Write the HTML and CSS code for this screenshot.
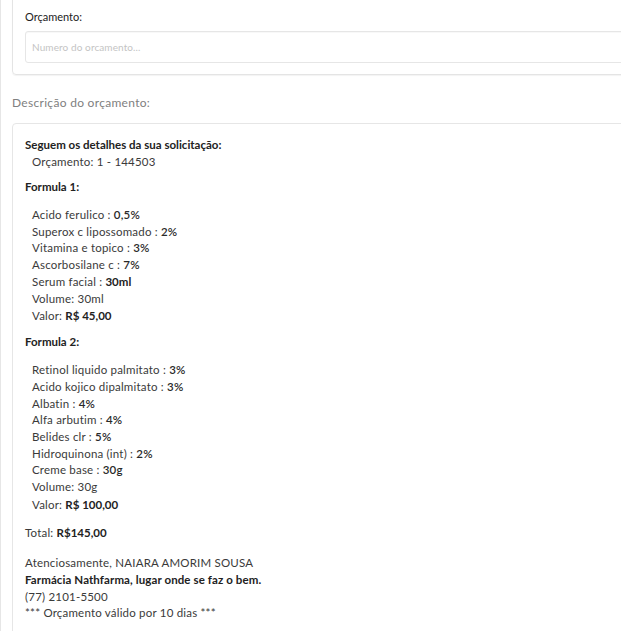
FILE: index.html
```html
<!DOCTYPE html>
<html lang="pt-BR">
<head>
<meta charset="utf-8">
<title>Orçamento</title>
<link rel="stylesheet" href="styles.css">
</head>
<body>
<div class="page">
  <div class="card">
    <label class="field-label" for="orc">Orçamento:</label>
    <input id="orc" class="field-input" type="text" placeholder="Numero do orcamento...">
  </div>

  <div class="desc-label">Descrição do orçamento:</div>

  <div class="desc-box">
    <div class="intro">
      <div class="strong">Seguem os detalhes da sua solicitação:</div>
      <div class="indent">Orçamento: 1 - 144503</div>
    </div>

    <div class="formula-title">Formula 1:</div>
    <ul class="items">
      <li>Acido ferulico : <span class="val">0,5%</span></li>
      <li>Superox c lipossomado : <span class="val">2%</span></li>
      <li>Vitamina e topico : <span class="val">3%</span></li>
      <li>Ascorbosilane c : <span class="val">7%</span></li>
      <li>Serum facial : <b>30ml</b></li>
      <li>Volume: 30ml</li>
      <li class="price">Valor: <b>R$ 45,00</b></li>
    </ul>

    <div class="formula-title">Formula 2:</div>
    <ul class="items">
      <li>Retinol liquido palmitato : <span class="val">3%</span></li>
      <li>Acido kojico dipalmitato : <span class="val">3%</span></li>
      <li>Albatin : <span class="val">4%</span></li>
      <li>Alfa arbutim : <span class="val">4%</span></li>
      <li>Belides clr : <span class="val">5%</span></li>
      <li>Hidroquinona (int) : <span class="val">2%</span></li>
      <li>Creme base : <span class="val">30g</span></li>
      <li>Volume: 30g</li>
      <li class="price">Valor: <b>R$ 100,00</b></li>
    </ul>

    <div class="total">Total: <b>R$145,00</b></div>

    <div class="signature">
      <div>Atenciosamente, NAIARA AMORIM SOUSA</div>
      <div class="strong wide">Farmácia Nathfarma, lugar onde se faz o bem.</div>
      <div>(77) 2101-5500</div>
      <div>*** Orçamento válido por 10 dias ***</div>
    </div>
  </div>
</div>
</body>
</html>
```

FILE: styles.css
```css
html, body {
  margin: 0;
  padding: 0;
  overflow: hidden;
  background: #fff;
}

body {
  font-family: Lato, "Open Sans", Arial, sans-serif;
  font-size: 11.5px;
  line-height: 16.7px;
  letter-spacing: 0.2px;
  color: #3a3a3a;
}

.page {
  width: 700px;
  border-left: 1px solid #e6e6e6;
  padding-left: 11px;
  min-height: 700px;
}

.card {
  margin-top: -10px;
  padding: 18px 12px 11px 12px;
  border: 1px solid #e4e4e4;
  border-radius: 4px;
  box-shadow: 0 1px 1px rgba(0, 0, 0, 0.05);
}

.field-label {
  display: block;
  margin-bottom: 5px;
  font-size: 11px;
  letter-spacing: 0;
  color: #222;
}

.field-input {
  display: block;
  box-sizing: border-box;
  width: 100%;
  height: 32px;
  margin: 0;
  padding: 0 6px;
  border: 1px solid #e6e6e6;
  border-radius: 3px;
  font-family: inherit;
  font-size: 10px;
  letter-spacing: 0.1px;
  color: #333;
  background: #fff;
  box-shadow: inset 0 1px 1px rgba(0, 0, 0, 0.03);
}

.field-input::placeholder {
  color: #c4c4c4;
}

.desc-label {
  margin-top: 20px;
  margin-bottom: 12px;
  font-size: 12px;
  letter-spacing: 0.3px;
  color: #808080;
}

.desc-box {
  border: 1px solid #e6e6e6;
  border-radius: 4px;
  padding: 13px 12px 20px 12px;
  min-height: 600px;
}

.strong {
  font-weight: 700;
  letter-spacing: 0;
  color: #222;
}

.strong.wide {
  letter-spacing: 0.1px;
}

.indent {
  padding-left: 7px;
}

.formula-title {
  margin-top: 8px;
  font-weight: 700;
  letter-spacing: 0;
  color: #222;
}

.items {
  list-style: none;
  margin: 11.5px 0 9px 0;
  padding: 0 0 0 7px;
}

.items + .formula-title {
  margin-top: 9px;
}

.items .price {
  margin-top: 1px;
}

.val {
  font-weight: 600;
  color: #2a2a2a;
}

.items b,
.total b {
  font-weight: 700;
  letter-spacing: 0;
  color: #222;
}

.total {
  margin-top: 12px;
}

.signature {
  margin-top: 13px;
}
```
